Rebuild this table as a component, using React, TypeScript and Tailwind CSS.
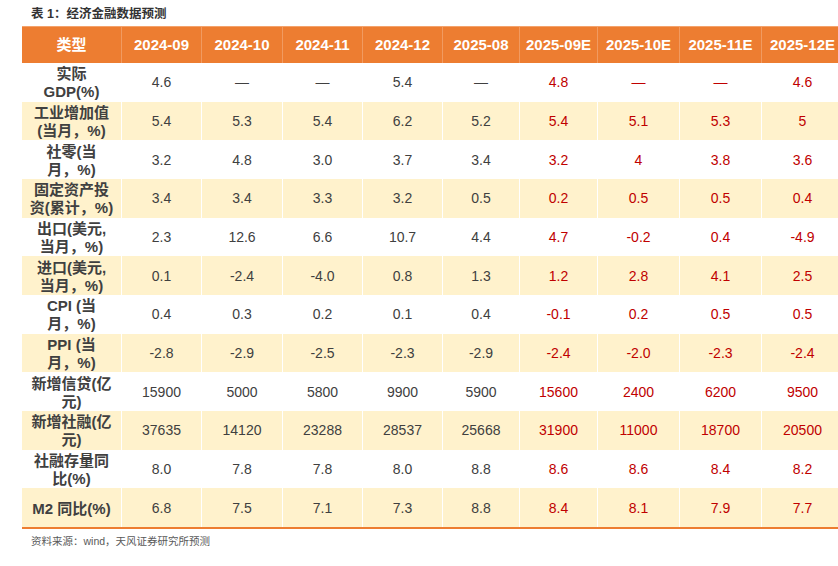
const cols = [
  { label: "2024-09", w: "w-[80px]" },
  { label: "2024-10", w: "w-[81px]" },
  { label: "2024-11", w: "w-[80px]" },
  { label: "2024-12", w: "w-[80px]" },
  { label: "2025-08", w: "w-[77px]" },
  { label: "2025-09E", w: "w-[78px]" },
  { label: "2025-10E", w: "w-[82px]" },
  { label: "2025-11E", w: "w-[82px]" },
  { label: "2025-12E", w: "w-[82px]" },
];

const rows: { name: string[]; vals: string[] }[] = [
  { name: ["实际", "GDP(%)"], vals: ["4.6", "—", "—", "5.4", "—", "4.8", "—", "—", "4.6"] },
  { name: ["工业增加值", "(当月，%)"], vals: ["5.4", "5.3", "5.4", "6.2", "5.2", "5.4", "5.1", "5.3", "5"] },
  { name: ["社零(当", "月，%)"], vals: ["3.2", "4.8", "3.0", "3.7", "3.4", "3.2", "4", "3.8", "3.6"] },
  { name: ["固定资产投", "资(累计，%)"], vals: ["3.4", "3.4", "3.3", "3.2", "0.5", "0.2", "0.5", "0.5", "0.4"] },
  { name: ["出口(美元,", "当月，%)"], vals: ["2.3", "12.6", "6.6", "10.7", "4.4", "4.7", "-0.2", "0.4", "-4.9"] },
  { name: ["进口(美元,", "当月，%)"], vals: ["0.1", "-2.4", "-4.0", "0.8", "1.3", "1.2", "2.8", "4.1", "2.5"] },
  { name: ["CPI (当", "月，%)"], vals: ["0.4", "0.3", "0.2", "0.1", "0.4", "-0.1", "0.2", "0.5", "0.5"] },
  { name: ["PPI (当", "月，%)"], vals: ["-2.8", "-2.9", "-2.5", "-2.3", "-2.9", "-2.4", "-2.0", "-2.3", "-2.4"] },
  { name: ["新增信贷(亿", "元)"], vals: ["15900", "5000", "5800", "9900", "5900", "15600", "2400", "6200", "9500"] },
  { name: ["新增社融(亿", "元)"], vals: ["37635", "14120", "23288", "28537", "25668", "31900", "11000", "18700", "20500"] },
  { name: ["社融存量同", "比(%)"], vals: ["8.0", "7.8", "7.8", "8.0", "8.8", "8.6", "8.6", "8.4", "8.2"] },
  { name: ["M2 同比(%)"], vals: ["6.8", "7.5", "7.1", "7.3", "8.8", "8.4", "8.1", "7.9", "7.7"] },
];

const font = "font-['Liberation_Sans','Noto_Sans_CJK_SC',sans-serif]";

export default function App() {
  return (
    <div className={`w-[838px] h-[566px] overflow-hidden bg-white ${font}`}>
      <div className="pl-[31px] pt-[6px] h-[26px] text-[12.5px] font-bold text-[#333333] leading-[16px]">
        表 1：经济金融数据预测
      </div>

      <div className="ml-[22px] w-[822px]">
        {/* header */}
        <div className="flex h-[37px] bg-[#ED7D31] text-white font-bold text-[15px] border-t border-[#F4A26B]">
          <div className="w-[100px] flex items-center justify-center border-r border-[#F19A60]">类型</div>
          {cols.map((c) => (
            <div key={c.label} className={`${c.w} shrink-0 flex items-center justify-center border-r border-[#F19A60]`}>
              {c.label}
            </div>
          ))}
        </div>

        {rows.map((r, i) => (
          <div
            key={i}
            className={`flex h-[38.67px] text-[14px] ${i % 2 === 1 ? "bg-[#FFF2CC]" : "bg-white"}`}
          >
            <div className="w-[100px] shrink-0 flex flex-col items-center justify-center pt-[2px] font-bold text-[15px] text-[#404040] leading-[18px] border-r border-white">
              {r.name.map((n) => (
                <span key={n}>{n}</span>
              ))}
            </div>
            {r.vals.map((v, j) => (
              <div
                key={j}
                className={`${cols[j].w} shrink-0 flex items-center justify-center pt-[1px] border-r border-white ${
                  j >= 5 ? "text-[#C00000]" : "text-[#404040]"
                }`}
              >
                {v}
              </div>
            ))}
          </div>
        ))}
        <div className="h-[2px] bg-[#ED7D31]" />
      </div>

      <div className="pl-[31px] pt-[5px] text-[10.5px] text-[#595959]">
        资料来源：wind，天风证券研究所预测
      </div>
    </div>
  );
}
